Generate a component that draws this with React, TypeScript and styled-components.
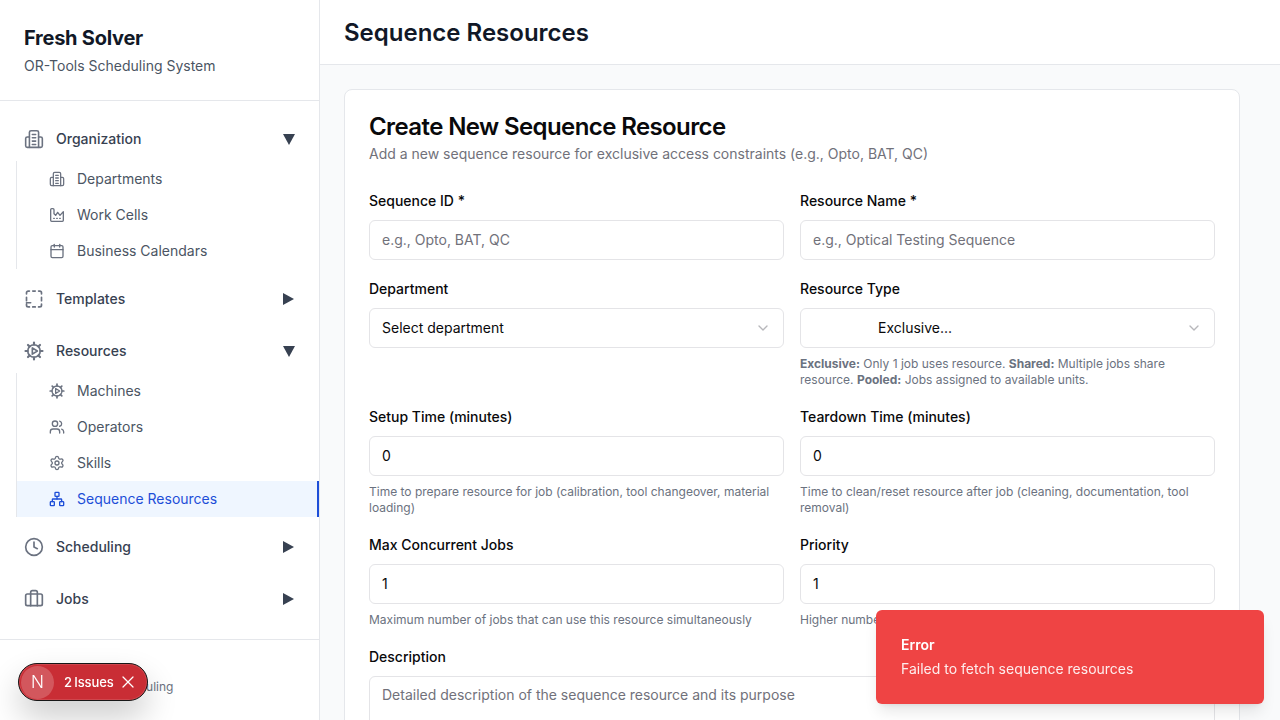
import React from "react";
import styled, { createGlobalStyle } from "styled-components";
import { ChevronDown, X, Calendar, Users, Settings, Network, Clock, Briefcase } from "lucide-react";

const Global = createGlobalStyle`
  html, body { margin: 0; padding: 0; height: 100%; overflow: hidden; }
  body { font-family: Inter, "Liberation Sans", sans-serif; background: #f9fafb; color: #111827; }
  * { box-sizing: border-box; }
`;

const Shell = styled.div`display: flex; height: 720px; overflow: hidden;`;
const Sidebar = styled.aside`
  width: 320px; flex: none; height: 720px; background: #fff; border-right: 1px solid #e5e7eb;
  display: flex; flex-direction: column;
`;
const Brand = styled.div`height: 101px; flex: none; padding: 24px 24px 0; border-bottom: 1px solid #e5e7eb;`;
const BrandName = styled.h1`margin: 0; font-size: 20px; line-height: 28px; font-weight: 700; color: #111827; letter-spacing: -0.25px;`;
const BrandSub = styled.p`margin: 4px 0 0; font-size: 14px; line-height: 20px; color: #4b5563;`;
const Nav = styled.nav`flex: 1; padding: 16px 0 0 16px;`;
const Group = styled.div`margin-bottom: 8px;`;
const ParentRow = styled.div`height: 44px; display: flex; align-items: center; padding: 0 22px 0 8px; color: #374151; font-size: 14px; font-weight: 500;`;
const ParentIcon = styled.span`width: 20px; height: 20px; color: #6b7280; display: flex; margin-right: 12px; svg { width: 20px; height: 20px; }`;
const ParentLabel = styled.span`flex: 1; padding-bottom: 2px;`;
const Caret = styled.span<{ $open?: boolean }>`
  width: 0; height: 0; display: block;
  ${p => p.$open
    ? "border-left: 6.5px solid transparent; border-right: 6.5px solid transparent; border-top: 11px solid #374151; margin-right: 2px;"
    : "border-top: 6px solid transparent; border-bottom: 6px solid transparent; border-left: 11px solid #374151; margin-right: 3px;"}
`;
const SubList = styled.div`border-left: 1px solid #e5e7eb;`;
const SubRow = styled.div<{ $active?: boolean }>`
  height: 36px; display: flex; align-items: center; gap: 12px; padding-left: 32px; font-size: 14px; font-weight: 400;
  color: ${p => (p.$active ? "#1d4ed8" : "#4b5563")};
  background: ${p => (p.$active ? "#eff6ff" : "transparent")};
  border-right: 2px solid ${p => (p.$active ? "#1d4ed8" : "transparent")};
  svg { width: 16px; height: 16px; flex: none; color: ${p => (p.$active ? "#1d4ed8" : "#6b7280")}; }
`;
const SubLabel = styled.span`padding-bottom: 2px;`;
const SideFooter = styled.div`height: 81px; flex: none; border-top: 1px solid #e5e7eb; padding: 39px 24px 0; font-size: 12px; line-height: 16px; color: #6b7280;`;

const Main = styled.main`flex: 1; min-width: 0; display: flex; flex-direction: column; height: 720px; overflow: hidden;`;
const TopBar = styled.header`height: 65px; flex: none; background: #fff; border-bottom: 1px solid #e5e7eb; padding: 17px 24px 0;`;
const PageTitle = styled.h2`margin: 0; font-size: 24px; line-height: 32px; font-weight: 600; color: #111827;`;
const Content = styled.div`flex: 1; padding: 24px 40px 0 24px; overflow: hidden;`;
const Card = styled.section`background: #fff; border: 1px solid #e5e7eb; border-radius: 8px; padding: 25px 24px 0;`;
const CardTitle = styled.h3`margin: 0; font-size: 24px; line-height: 24px; font-weight: 600; letter-spacing: -0.6px; color: #09090b;`;
const CardSub = styled.p`margin: 5px 0 0; font-size: 14px; line-height: 20px; color: #71717a;`;
const Form = styled.div`margin-top: 30px; display: grid; grid-template-columns: 1fr 1fr; column-gap: 16px; row-gap: 22px;`;
const Field = styled.div<{ $wide?: boolean }>`${p => (p.$wide ? "grid-column: 1 / -1;" : "")}`;
const Label = styled.label`display: block; font-size: 14px; line-height: 14px; font-weight: 500; color: #09090b; margin-bottom: 12px;`;
const Input = styled.div<{ $muted?: boolean }>`
  height: 40px; border: 1px solid #e4e4e7; border-radius: 6px; background: #fff; padding: 0 12px 2px;
  display: flex; align-items: center; font-size: 14px; color: ${p => (p.$muted ? "#71717a" : "#09090b")};
`;
const TextArea = styled(Input)`height: 80px; align-items: flex-start; padding-top: 8px; line-height: 20px;`;
const SelectBox = styled(Input)`justify-content: space-between; padding-bottom: 0; span { padding-bottom: 2px; } svg { width: 16px; height: 16px; opacity: 0.5; color: #71717a; }`;
const Indented = styled.span`padding-left: 65px;`;
const Hint = styled.p`margin: 8px 0 0; font-size: 12px; line-height: 16px; color: #6b7280; b { font-weight: 700; }`;

const Toast = styled.div`
  position: fixed; left: 876px; top: 610px; width: 388px; height: 94px; border-radius: 6px; background: #ef4444; color: #fff;
  padding: 25px 25px 0; box-shadow: 0 10px 15px -3px rgba(0,0,0,.1), 0 4px 6px -4px rgba(0,0,0,.1);
`;
const ToastTitle = styled.div`font-size: 14px; line-height: 20px; font-weight: 600;`;
const ToastText = styled.div`font-size: 14px; line-height: 20px; margin-top: 4px; opacity: 0.9;`;

const DevPill = styled.div`
  position: fixed; left: 18px; top: 663px; width: 130px; height: 38px; border-radius: 19px; background: #c92d35;
  border: 1px solid #171717; box-shadow: 0 16px 32px rgba(0,0,0,.2), inset 0 0 0 1px rgba(255,255,255,.12);
  display: flex; align-items: center; padding-left: 2px; color: #fff;
`;
const DevLogo = styled.div`
  width: 33px; height: 33px; border-radius: 50%; background: rgba(255,255,255,.2); flex: none;
  display: flex; align-items: center; justify-content: center; font-size: 17px; font-weight: 300; color: #fff;
`;
const DevCount = styled.span`font-size: 13px; font-weight: 500; margin-left: 10px; letter-spacing: -0.1px; word-spacing: -1px; white-space: nowrap;`;
const DevClose = styled.span`display: flex; margin-left: 4px; svg { width: 20px; height: 20px; stroke-width: 1.5; }`;

const icon = { fill: "none", stroke: "currentColor", strokeWidth: 2, strokeLinecap: "round" as const, strokeLinejoin: "round" as const, viewBox: "0 0 24 24" };
const OrgIcon = () => (
  <svg {...icon} strokeWidth={1.9}>
    <path d="M6.5 22V4a2 2 0 0 1 2-2h7a2 2 0 0 1 2 2v18Z" />
    <path d="M6.5 9.5H4a2 2 0 0 0-2 2V20a2 2 0 0 0 2 2h2.5" />
    <path d="M17.5 9.5H20a2 2 0 0 1 2 2V20a2 2 0 0 1-2 2h-2.5" />
    <path d="M10 6.5h4M10 10.5h4M10 14.5h4M10 18.5h4" />
  </svg>
);
const TemplatesIcon = () => (
  <svg {...icon}>
    <path d="M3 6V4.5a2 2 0 0 1 2-2h1.5M10.5 2.5h3M17.5 2.5H19a2 2 0 0 1 2 2V6M21 10v4M21 18v1.5a2 2 0 0 1-2 2h-1.5M13.5 21.5h-3M6.5 21.5H5a2 2 0 0 1-2-2V18M3 14v-4M3 16.5h5" />
  </svg>
);
const MachineIcon = () => (
  <svg {...icon}>
    <circle cx="12" cy="12" r="7.5" />
    <path d="M10 8.2v7.6l6-3.8Z" />
    <path d="M12 1.8v2.7M12 19.5v2.7M1.8 12h2.7M19.5 12h2.7M4.8 4.8l1.9 1.9M17.3 17.3l1.9 1.9M4.8 19.2l1.9-1.9M17.3 6.7l1.9-1.9" strokeWidth={2.6} />
  </svg>
);
const FactoryIcon = () => (
  <svg {...icon}>
    <path d="M2.5 20a1.5 1.5 0 0 0 1.5 1.5h16a1.5 1.5 0 0 0 1.5-1.5V7l-5 5.5L13 8l-3 4.5-2.5-2.5V4A1.5 1.5 0 0 0 6 2.5H4A1.5 1.5 0 0 0 2.5 4Z" />
    <path d="M7 17h1M11.5 17h1M16 17h1" />
  </svg>
);

const Sub = ({ icon: I, label, active }: { icon: React.ReactNode; label: string; active?: boolean }) => (
  <SubRow $active={active}>{I}<SubLabel>{label}</SubLabel></SubRow>
);
const Parent = ({ icon: I, label, open }: { icon: React.ReactNode; label: string; open?: boolean }) => (
  <ParentRow><ParentIcon>{I}</ParentIcon><ParentLabel>{label}</ParentLabel><Caret $open={open} /></ParentRow>
);

export default function App() {
  return (
    <>
      <Global />
      <Shell>
        <Sidebar>
          <Brand>
            <BrandName>Fresh Solver</BrandName>
            <BrandSub>OR-Tools Scheduling System</BrandSub>
          </Brand>
          <Nav>
            <Group>
              <Parent icon={<OrgIcon />} label="Organization" open />
              <SubList>
                <Sub icon={<OrgIcon />} label="Departments" />
                <Sub icon={<FactoryIcon />} label="Work Cells" />
                <Sub icon={<Calendar />} label="Business Calendars" />
              </SubList>
            </Group>
            <Group><Parent icon={<TemplatesIcon />} label="Templates" /></Group>
            <Group>
              <Parent icon={<MachineIcon />} label="Resources" open />
              <SubList>
                <Sub icon={<MachineIcon />} label="Machines" />
                <Sub icon={<Users />} label="Operators" />
                <Sub icon={<Settings />} label="Skills" />
                <Sub icon={<Network />} label="Sequence Resources" active />
              </SubList>
            </Group>
            <Group><Parent icon={<Clock />} label="Scheduling" /></Group>
            <Group><Parent icon={<Briefcase />} label="Jobs" /></Group>
          </Nav>
          <SideFooter>Manufacturing Scheduling</SideFooter>
        </Sidebar>
        <Main>
          <TopBar><PageTitle>Sequence Resources</PageTitle></TopBar>
          <Content>
            <Card>
              <CardTitle>Create New Sequence Resource</CardTitle>
              <CardSub>Add a new sequence resource for exclusive access constraints (e.g., Opto, BAT, QC)</CardSub>
              <Form>
                <Field>
                  <Label>Sequence ID *</Label>
                  <Input $muted>e.g., Opto, BAT, QC</Input>
                </Field>
                <Field>
                  <Label>Resource Name *</Label>
                  <Input $muted>e.g., Optical Testing Sequence</Input>
                </Field>
                <Field>
                  <Label>Department</Label>
                  <SelectBox><span>Select department</span><ChevronDown /></SelectBox>
                </Field>
                <Field>
                  <Label>Resource Type</Label>
                  <SelectBox><Indented>Exclusive...</Indented><ChevronDown /></SelectBox>
                  <Hint><b>Exclusive:</b> Only 1 job uses resource. <b>Shared:</b> Multiple jobs share resource. <b>Pooled:</b> Jobs assigned to available units.</Hint>
                </Field>
                <Field>
                  <Label>Setup Time (minutes)</Label>
                  <Input>0</Input>
                  <Hint>Time to prepare resource for job (calibration, tool changeover, material loading)</Hint>
                </Field>
                <Field>
                  <Label>Teardown Time (minutes)</Label>
                  <Input>0</Input>
                  <Hint>Time to clean/reset resource after job (cleaning, documentation, tool removal)</Hint>
                </Field>
                <Field>
                  <Label>Max Concurrent Jobs</Label>
                  <Input>1</Input>
                  <Hint>Maximum number of jobs that can use this resource simultaneously</Hint>
                </Field>
                <Field>
                  <Label>Priority</Label>
                  <Input>1</Input>
                  <Hint>Higher numbers indicate higher priority</Hint>
                </Field>
                <Field $wide>
                  <Label>Description</Label>
                  <TextArea $muted>Detailed description of the sequence resource and its purpose</TextArea>
                </Field>
              </Form>
            </Card>
          </Content>
        </Main>
      </Shell>
      <Toast>
        <ToastTitle>Error</ToastTitle>
        <ToastText>Failed to fetch sequence resources</ToastText>
      </Toast>
      <DevPill>
        <DevLogo>N</DevLogo>
        <DevCount>2 Issues</DevCount>
        <DevClose><X /></DevClose>
      </DevPill>
    </>
  );
}
